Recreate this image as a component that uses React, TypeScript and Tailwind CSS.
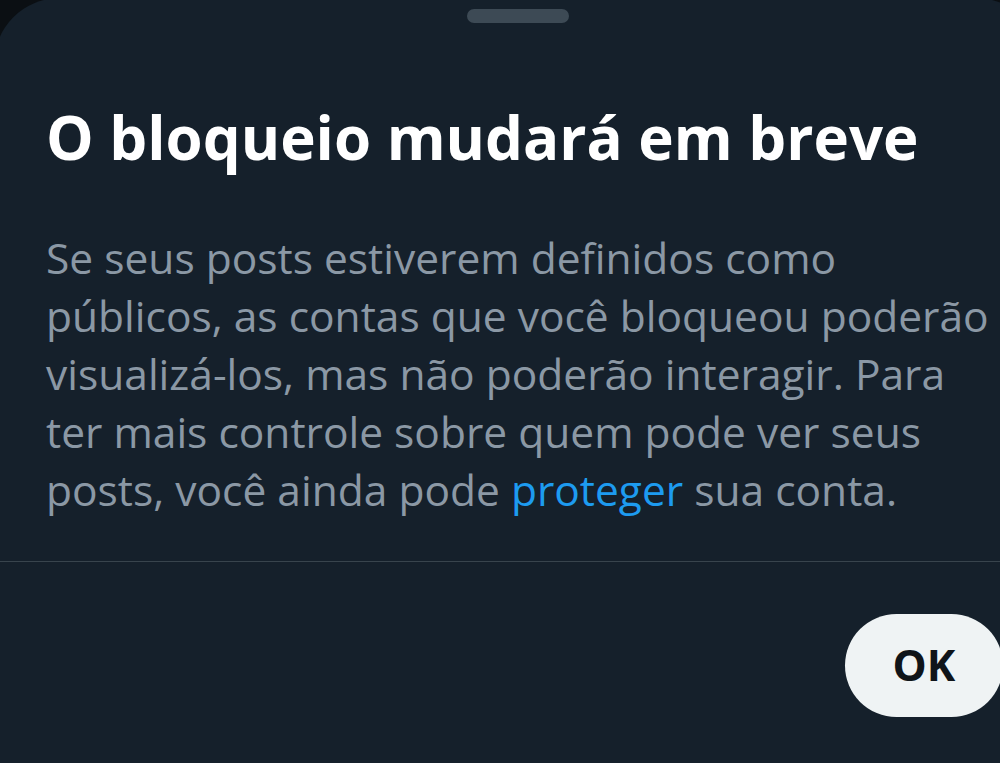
import React from 'react';

const App: React.FC = () => {
  return (
    <div className="w-[1000px] h-[763px] bg-[#0b0f13] overflow-hidden">
      <div
        className="w-[1048px] h-[775px] ml-[-6px] mt-[-2px] rounded-t-[66px] bg-[#15202b] flex flex-col"
        style={{ fontFamily: '"Open Sans", "Noto Sans", sans-serif' }}
      >
        {/* Grabber */}
        <div className="flex justify-center pt-[11px]">
          <div className="w-[102px] h-[14px] rounded-full bg-[#3d4a55]" />
        </div>

        <div className="pl-[52px]">
          <h1 className="mt-[78px] text-[60px] leading-[72px] font-bold text-white whitespace-nowrap">
            O bloqueio mudará em breve
          </h1>
          <p className="mt-[56px] text-[42.5px] leading-[58px] text-[#8b98a5] whitespace-nowrap">
            Se seus posts estiverem definidos como
            <br />
            públicos, as contas que você bloqueou poderão
            <br />
            visualizá-los, mas não poderão interagir. Para
            <br />
            ter mais controle sobre quem pode ver seus
            <br />
            posts, você ainda pode <span className="text-[#1d9bf0]">proteger</span> sua conta.
          </p>
        </div>

        <div className="mt-[42px] h-px bg-[#38444d]" />

        <div className="flex justify-end mt-[52px] pr-[39px]">
          <button className="w-[158px] h-[103px] rounded-full bg-[#eff3f4] text-[#0f1419] text-[43px] font-bold">
            OK
          </button>
        </div>
      </div>
    </div>
  );
};

export default App;
